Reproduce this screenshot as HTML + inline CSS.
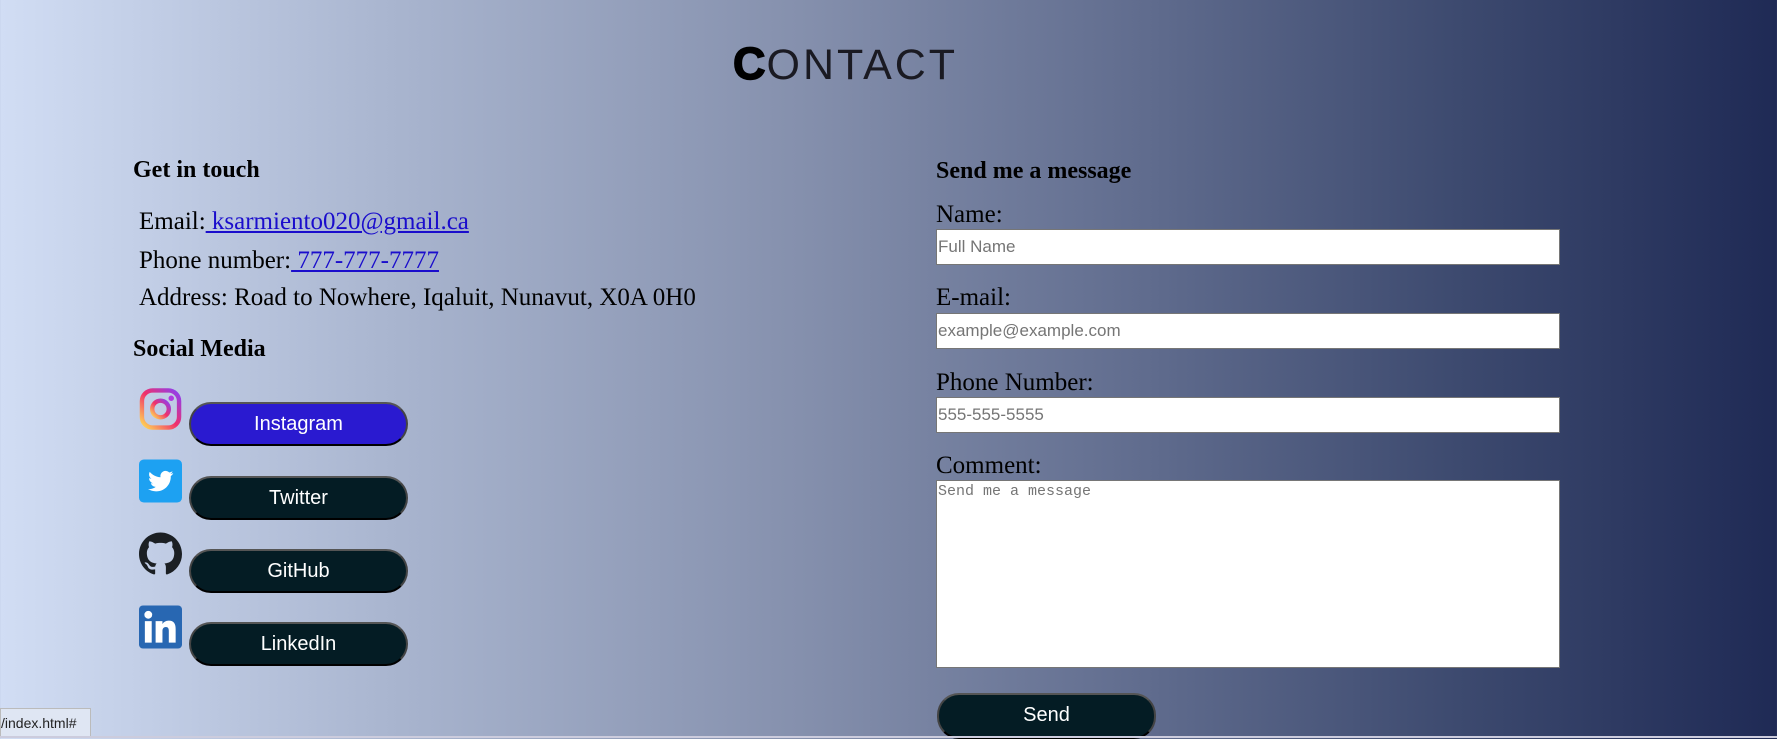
<!DOCTYPE html>
<html><head><meta charset="utf-8"><style>
*{margin:0;padding:0;box-sizing:border-box}
body{width:1777px;height:738px;overflow:hidden;position:relative;background:linear-gradient(90deg,#d1ddf4 0%,#a9b5cf 22%,#8590ad 45%,#5f6b8d 65%,#3d4a6f 82%,#1f2a55 100%);font-family:"Liberation Serif",serif;color:#000}
.a{position:absolute;white-space:nowrap}
h2{font-size:24px;font-weight:bold}
.t{font-size:25px}
a{color:#1a0dcc}
.btn{position:absolute;width:219px;height:44px;border-radius:22px;background:#041c24;border:2px solid #444;border-top-color:#555;border-bottom-color:#000;color:#fff;font-family:"Liberation Sans",sans-serif;font-size:20px;text-align:center;line-height:40px}
.in{position:absolute;left:936px;width:624px;height:36px;background:#fff;border:1px solid #767676;font-family:"Liberation Sans",sans-serif;font-size:17px;color:#757575;padding-left:1px;line-height:34px}
</style></head><body>
<div class="a" style="left:733px;top:38px;font-family:'Liberation Sans',sans-serif;font-size:43px;letter-spacing:3px;color:#222"><span style="font-weight:900;font-size:45px;letter-spacing:1px;color:#000;-webkit-text-stroke:1.5px #000">C</span><span style="font-weight:normal;color:#1a1a22">ONTACT</span></div>

<h2 class="a" style="left:133px;top:157px">Get in touch</h2>
<div class="a t" style="left:139px;top:208px">Email:<a href="#"> ksarmiento020@gmail.ca</a></div>
<div class="a t" style="left:139px;top:247px">Phone number:<a href="#"> 777-777-7777</a></div>
<div class="a t" style="left:139px;top:284px">Address: Road to Nowhere, Iqaluit, Nunavut, X0A 0H0</div>
<h2 class="a" style="left:133px;top:336px">Social Media</h2>

<svg class="a" style="left:139px;top:387px" width="43" height="44" viewBox="0 0 44 44"><defs><linearGradient id="g" x1="0" y1="1" x2="1" y2="0"><stop offset="0" stop-color="#fd5"/><stop offset=".5" stop-color="#f0306a"/><stop offset="1" stop-color="#8a3ff5"/></linearGradient></defs><rect x="3" y="3" width="38" height="38" rx="11" fill="none" stroke="url(#g)" stroke-width="4.5"/><circle cx="22" cy="22" r="8.5" fill="none" stroke="url(#g)" stroke-width="4.5"/><circle cx="33" cy="11" r="2.8" fill="#b03ae0"/></svg>
<div class="btn" style="left:189px;top:402px;background:#2a1ad0">Instagram</div>

<svg class="a" style="left:139px;top:459px" width="43" height="44" viewBox="0 0 44 44"><rect width="44" height="44" rx="5" fill="#1da1f2"/><path d="M35 14c-1 .5-2 .7-3 .8 1-.6 2-1.6 2.3-2.8-1 .6-2 1-3.3 1.3a5.3 5.3 0 0 0-9 4.8c-4.4-.2-8.3-2.3-11-5.5-1.4 2.4-.6 5.5 1.7 7-.9 0-1.7-.3-2.4-.6 0 2.6 1.8 4.7 4.2 5.2-.8.2-1.6.2-2.4.1.7 2.1 2.6 3.6 5 3.7-2.2 1.7-5 2.5-7.8 2.2 2.4 1.5 5.2 2.4 8.2 2.4 9.9 0 15.4-8.3 15-15.6 1-.7 2-1.7 2.5-2.9z" fill="#fff"/></svg>
<div class="btn" style="left:189px;top:476px">Twitter</div>

<svg class="a" style="left:139px;top:532px" width="43" height="44" viewBox="0 0 16 16"><path fill="#1b1f23" d="M8 0C3.58 0 0 3.58 0 8c0 3.54 2.29 6.53 5.47 7.59.4.07.55-.17.55-.38 0-.19-.01-.82-.01-1.49-2.01.37-2.53-.49-2.69-.94-.09-.23-.48-.94-.82-1.13-.28-.15-.68-.52-.01-.53.63-.01 1.08.58 1.23.82.72 1.21 1.87.87 2.33.66.07-.52.28-.87.51-1.07-1.78-.2-3.64-.89-3.64-3.95 0-.87.31-1.59.82-2.15-.08-.2-.36-1.02.08-2.12 0 0 .67-.21 2.2.82.64-.18 1.32-.27 2-.27s1.36.09 2 .27c1.53-1.04 2.2-.82 2.2-.82.44 1.1.16 1.92.08 2.12.51.56.82 1.27.82 2.15 0 3.07-1.87 3.75-3.65 3.95.29.25.54.73.54 1.48 0 1.07-.01 1.93-.01 2.2 0 .21.15.46.55.38A8.01 8.01 0 0 0 16 8c0-4.42-3.58-8-8-8z"/></svg>
<div class="btn" style="left:189px;top:549px">GitHub</div>

<svg class="a" style="left:139px;top:605px" width="43" height="44" viewBox="0 0 44 44"><rect width="44" height="44" rx="4" fill="#2867b2"/><rect x="6" y="16" width="7" height="22" fill="#fff"/><circle cx="9.5" cy="9.5" r="4" fill="#fff"/><path d="M17 16h7v3c1.2-2 3.3-3.5 6.5-3.5 5 0 7 3 7 8.5V38h-7V26c0-2.5-.8-4-3-4s-3.5 1.5-3.5 4v12h-7z" fill="#fff"/></svg>
<div class="btn" style="left:189px;top:622px">LinkedIn</div>

<h2 class="a" style="left:936px;top:158px">Send me a message</h2>
<div class="a t" style="left:936px;top:201px">Name:</div>
<div class="in" style="top:229px">Full Name</div>
<div class="a t" style="left:936px;top:284px">E-mail:</div>
<div class="in" style="top:313px">example@example.com</div>
<div class="a t" style="left:936px;top:369px">Phone Number:</div>
<div class="in" style="top:397px">555-555-5555</div>
<div class="a t" style="left:936px;top:452px">Comment:</div>
<div class="in" style="top:480px;height:188px;font-family:'Liberation Mono',monospace;font-size:15px;line-height:20px;padding-top:1px">Send me a message</div>
<div class="btn" style="left:937px;top:693px;height:46px">Send</div>

<div class="a" style="left:0;top:708px;width:91px;height:30px;background:#dfe6f3;border:1px solid #bbb;font-family:'Liberation Sans',sans-serif;font-size:14px;line-height:28px;color:#222;overflow:hidden">/index.html#</div>
<div class="a" style="left:0;top:736px;width:1777px;height:2px;background:#ccd"></div>
</body></html>
